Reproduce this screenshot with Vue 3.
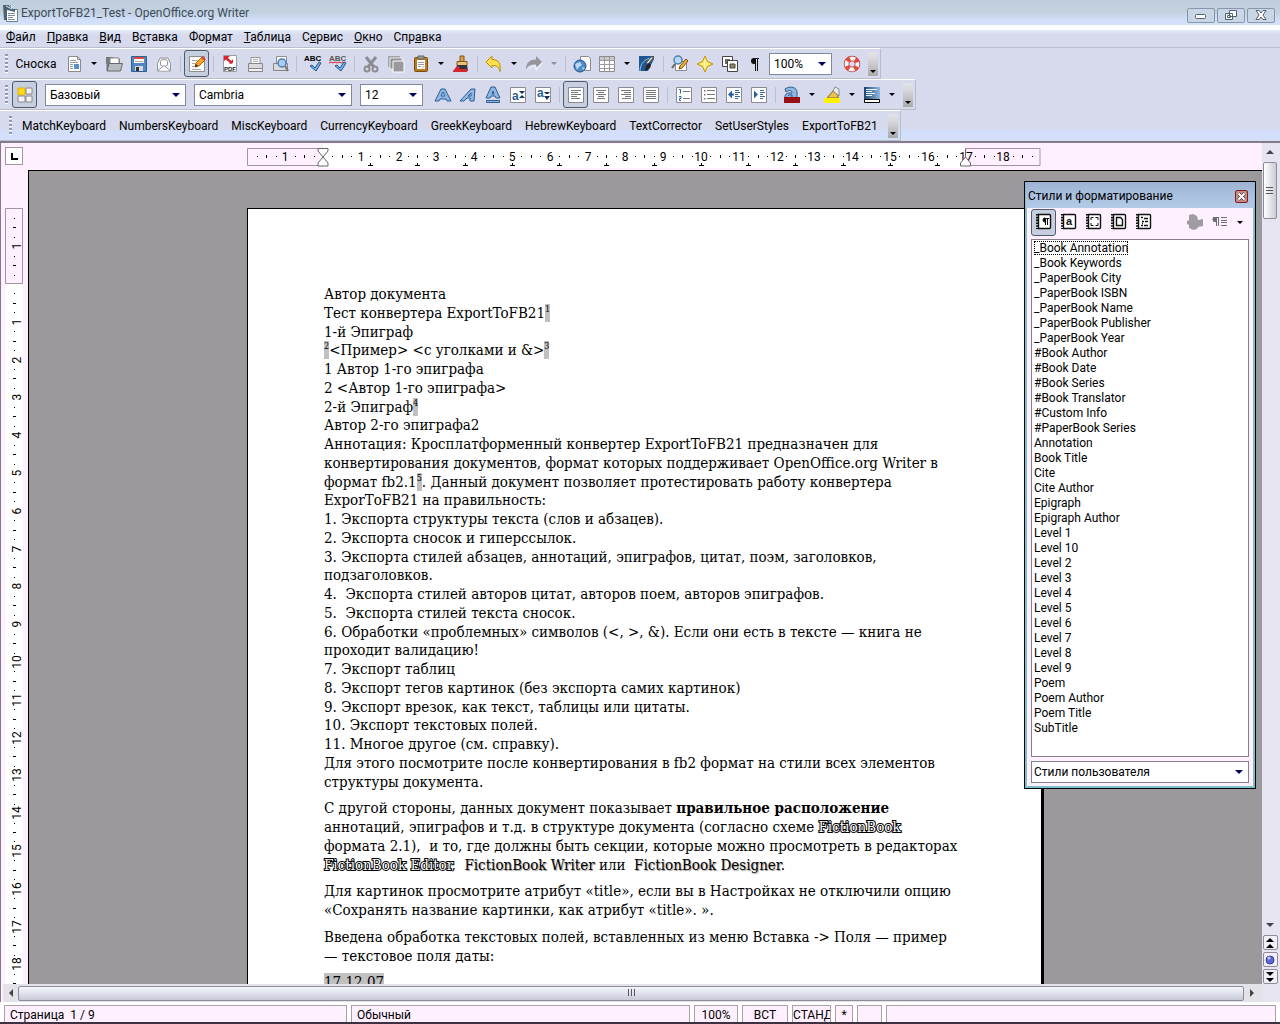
<script setup>
const menus = [
  ['', 'Ф', 'айл'],
  ['', 'П', 'равка'],
  ['', 'В', 'ид'],
  ['В', 'с', 'тавка'],
  ['Фо', 'р', 'мат'],
  ['', 'Т', 'аблица'],
  ['С', 'е', 'рвис'],
  ['', 'О', 'кно'],
  ['Спр', 'а', 'вка'],
]

const sheet = '<path d="M1.5 1.5h15v15h-15z" fill="#fff" stroke="#8a8a8f"/>'
const rows = (d, c = '#77777c') => `<path d="${d}" stroke="${c}" fill="none"/>`
const spell = (c, wave) =>
  `<text x="0" y="6" font-family="Liberation Sans" font-size="8" font-weight="bold" fill="${c}">ABC</text>${wave}<path d="M6 11l2-1 3 3 4-6 2 1-5 8z" fill="#7ab0e8" stroke="#23598f"/>`
const letter =
  '<path d="M1 15L7 3h4l6 12h-4l-1-2H6l-1 2zM7 10h4L9 6z" fill="#8fb7df" stroke="#2b5d94" fill-rule="evenodd"/>'
const book = '<path d="M3.5 1.5h11a1 1 0 0 1 1 1v12a1 1 0 0 1-1 1h-11z" fill="#fff" stroke="#111" stroke-width="1.4"/><path d="M2.5 1v15" stroke="#111" stroke-width="3" stroke-dasharray="1.6 1.2"/>'

const art = {
  doc: '<path d="M3.5 1.5h9l3 3v12h-12z" fill="#fff" stroke="#8a8a8f"/><path d="M12.500 1.500v3h3" fill="none" stroke="#8a8a8f"/><path d="M5 5.500h6M5 7.500h8M5 9.500h3M5 11.500h3M5 13.500h3" stroke="#999"/><path d="M9 9h5v5H9z" fill="#5b8fc4"/>',
  open: '<path d="M1 2h7l1 2h6v5H1z" fill="#777a7d"/><path d="M5 3h9v6H5z" fill="#fff" stroke="#888"/><path d="M1.500 8.500h3v7h-3z" fill="#777"/><path d="M4 8.500h13.500l-2 7.500H2z" fill="#b9bcc0" stroke="#65686c"/>',
  save: '<path d="M1.500 1.500h15v15h-15z" fill="#4d86c0" stroke="#2d5f96"/><path d="M4 2h10v6H4z" fill="#fff"/><path d="M4 2h10v2H4z" fill="#e04a3e"/><path d="M5 6.500h8" stroke="#aaa"/><path d="M5 11h8v5H5z" fill="#d7dade"/><path d="M6 12h3v4H6z" fill="#333"/>',
  mail: '<path d="M2.500 8.500L5 3h8l2.500 5.500v7.500h-13z" fill="#f7f7f7" stroke="#96969a"/><path d="M5.500 10V6.500q0-2 3.500-2t3.500 2V10L9 12z" fill="#fff" stroke="#96969a"/><path d="M3 15.500l6-5 6 5" fill="#fff" stroke="#96969a"/>',
  edit: sheet + rows('M4 5.500h7M4 8.500h6M4 11.500h5M4 14.500h9', '#aaa') + '<path d="M7 12l1-4 6-6 3 3-6 6z" fill="#f5a623" stroke="#b86a10"/><path d="M7 12l1-3 2 2z" fill="#222"/><path d="M14 2l3 3" stroke="#e0372c" stroke-width="2"/>',
  pdf: '<path d="M2.500.500h13v16h-13z" fill="#fff" stroke="#9a9a9f"/><path d="M5 3l6 5" stroke="#d8262c" stroke-width="2.500"/><path d="M3 1h6L3 6zM12 8l-4 1 4-5z" fill="#d8262c"/><text x="3" y="16" font-family="Liberation Sans" font-size="6" font-weight="bold" fill="#222">PDF</text>',
  print: '<path d="M5 2.500h9v6H5z" fill="#fff" stroke="#909095"/><path d="M7 4.500h5M7 6.500h5" stroke="#aaa"/><path d="M2.500 8.500h14v5h-14z" fill="#d9dadd" stroke="#85858a"/><path d="M2.500 13.500h14v3h-14z" fill="#f2f2f2" stroke="#85858a"/>',
  preview: '<path d="M5.500 1.500h10v7h-10z" fill="#fff" stroke="#909095"/><path d="M2.500 8.500h14v7h-14z" fill="#d9dadd" stroke="#85858a"/><circle cx="11" cy="8" r="4" fill="#a8cdf0" stroke="#4c7fb4" stroke-width="1.500"/><path d="M14 11l3 5" stroke="#777" stroke-width="2"/>',
  spell: spell('#000', ''),
  auto: spell('#555', '<path d="M0 8l2-1 2 1 2-1 2 1 2-1 2 1 2-1 2 1" stroke="#d8262c" fill="none"/>'),
  cut: '<path d="M4 2l8 10M14 2L6 12" stroke="#8d8d91" stroke-width="3"/><circle cx="5" cy="14" r="2.500" fill="none" stroke="#8d8d91" stroke-width="2"/><circle cx="13" cy="14" r="2.500" fill="none" stroke="#8d8d91" stroke-width="2"/>',
  copy: '<path d="M1 1h12v11H1z" fill="#a4a4a8"/><path d="M3 3h12v11H3z" fill="#8f8f93" stroke="#eee"/><path d="M6 6h11v11H6z" fill="#9a9a9e" stroke="#fff"/>',
  paste: '<rect x="2.500" y="2.500" width="13" height="14" rx="1" fill="#b57a22" stroke="#7a4c0b"/><path d="M5 5h8v9H5z" fill="#fff"/><path d="M6 1h6v3H6z" fill="#999" stroke="#666"/><path d="M6 7.500h6M6 9.500h6M6 11.500h3" stroke="#999"/><path d="M10 14v-3h4z" fill="#d5d5d5"/>',
  brush: '<path d="M8 1h4v6H8z" fill="#d7a24c" stroke="#855510"/><path d="M5 6.500h10v4H5z" fill="#e9c277" stroke="#855510"/><path d="M5 10h10l1 6H4z" fill="#33343c"/><path d="M1 16l4-5 3 1-1 2h8v3H1z" fill="#d4262c"/>',
  undo: '<path d="M1 7l6-6v3.500c6 0 9 3 8 12-1-5-3-6-8-6V13z" fill="#ffe04a" stroke="#b98e00"/>',
  redo: '<path d="M17 7l-6-6v3.500c-6 0-10 3-10 10 2-4 4-5 10-5V13z" fill="#96969a"/><path d="M4 14c3-3 6-3 7-3v4l6-7" fill="none" stroke="#fff"/>',
  web: '<path d="M7.500 1.500h8l2 2v12h-10z" fill="#fff" stroke="#8a8a8f"/><circle cx="7" cy="11" r="6" fill="#4e8bc8" stroke="#245488"/><path d="M2 9l5-2 2 3-3 2-2 3zM9 12l3 1-2 2z" fill="#b9d9f3"/>',
  table: sheet + '<path d="M2 2h14v3H2z" fill="#c9c9cc"/><path d="M1 5.500h16M1 9.500h16M1 13.500h16M6.500 2v14M11.500 2v14" stroke="#9b9b9f"/>',
  draw: '<path d="M1 1h15v3L10 16H1z" fill="#1f568f"/><path d="M2 16C2 8 8 3 14 3" stroke="#8fc2ef" fill="none"/><path d="M16 2l-6 7-2-1 5-6z" fill="#e8d7c1" stroke="#555"/><path d="M11 8l-3 3-1 5 5-3 1-3z" fill="#222"/>',
  find: '<path d="M4.500 6.500h11v9h-11z" fill="#fff" stroke="#8a8a8f"/><circle cx="7" cy="5" r="4" fill="#b9d9f3" stroke="#4c7fb4" stroke-width="1.500"/><path d="M4 9l-3 4" stroke="#666" stroke-width="2"/><path d="M8 14l1-3 6-7 2 2-6 7z" fill="#f2b233" stroke="#7a4c0b"/>',
  star: '<path d="M9 1l2.500 5.500L17 9l-5.500 2.500L9 17l-2.500-5.500L1 9l5.500-2.500z" fill="#ffe45c" stroke="#c79400"/><path d="M9 5v8M5 9h8" stroke="#fff8c8"/>',
  gallery: '<path d="M1.500 1.500h10v10h-10z" fill="#fff" stroke="#444"/><path d="M4 4h5v5H4z" fill="#6b6b60"/><path d="M6.500 5.500h10v11h-10z" fill="#fff" stroke="#444"/><path d="M9 9h5v4H9z" fill="#8a8a5c" stroke="#444"/>',
  pilcrow: '<path d="M8 3.500h5M9.500 3v13M11.500 3v13" stroke="#111"/><path d="M10 3H8a3 3 0 0 0 0 6h2z" fill="#111"/>',
  help: '<circle cx="9" cy="9" r="5.500" fill="none" stroke="#b33" stroke-width="5.500"/><circle cx="9" cy="9" r="5.500" fill="none" stroke="#f4f4f4" stroke-width="4"/><circle cx="9" cy="9" r="5.500" fill="none" stroke="#e2493b" stroke-width="4.500" stroke-dasharray="3.600 5.040" stroke-dashoffset="-2.500"/>',
  styles: '<path d="M2 2h7v7H2z" fill="#ffd91a" stroke="#e0b400"/><path d="M10 2h6v6h-6zM2 10h7v6H2zM10 10h6v6h-6z" fill="#f2f2f4" stroke="#8a8a8f"/>',
  bold: letter,
  italic: '<path d="M1 15L12 3h4l-1 12h-4v-3H8l-3 3zM9 10h3V7z" fill="#8fb7df" stroke="#2b5d94" fill-rule="evenodd"/>',
  under: '<path d="M2 12L7 1h4l5 11h-4l-1-2H7l-1 2zM8 8h2l-1-3z" fill="#8fb7df" stroke="#2b5d94" fill-rule="evenodd"/><path d="M2.500 14.500h13v2h-13z" fill="#8fb7df" stroke="#2b5d94"/>',
  sup: sheet + '<text x="3" y="14" font-family="Liberation Sans" font-size="12" font-weight="bold" fill="#2b5d94">a</text><path d="M10 5h6l-3 3zM10 12h6l-3-3z" fill="#1c2f5c"/>',
  sub: sheet + '<text x="3" y="11" font-family="Liberation Sans" font-size="12" font-weight="bold" fill="#2b5d94">a</text><path d="M10 6h6l-2 2h-2zM10 10h6l-3 4z" fill="#1c2f5c"/>',
  left: sheet + rows('M4 4.500h10M4 6.500h7M4 8.500h10M4 10.500h6M4 12.500h9'),
  center: sheet + rows('M4 4.500h10M6 6.500h6M4 8.500h10M6 10.500h6M5 12.500h8'),
  right: sheet + rows('M4 4.500h10M7 6.500h7M4 8.500h10M8 10.500h6M5 12.500h9'),
  justify: sheet + rows('M4 4.500h10M4 6.500h10M4 8.500h10M4 10.500h10M4 12.500h10'),
  numbers: sheet + rows('M8 5.500h7M8 12.500h7') + '<path d="M4 3.500h1.500v4M4 10.500h2v2H4.500v2H6" stroke="#2a5fa8" fill="none"/>',
  bullets: sheet + rows('M7 4.500h8M7 8.500h8M7 12.500h8') + '<path d="M4 4h1.500v1.500H4zM4 8h1.500v1.500H4zM4 12h1.500v1.500H4z" fill="#777"/>',
  outdent: sheet + '<path d="M3 8.500l4-4v3h2v2H7v3z" fill="#2a5fa8"/>' + rows('M10 4.500h4M10 6.500h5M10 8.500h3M10 10.500h5M10 12.500h3', '#3f6aa0'),
  indent: sheet + '<path d="M8 8.500l-4-4v8z" fill="#2a5fa8"/>' + rows('M10 4.500h4M10 6.500h5M10 8.500h3M10 10.500h5M10 12.500h3', '#3f6aa0'),
  color: '<path d="M2 11c0-4 3-4 7-4 0-3-3-3-6-1L2 3c6-4 12-1 12 3v5" fill="#8fb7df" stroke="#2b5d94"/><path d="M5 10c1-2 3-1 4-1v2" fill="none" stroke="#2b5d94"/><path d="M1 11h16v6H1z" fill="#9b0f16"/>',
  highlight: '<path d="M4 12L10 5l5 4v3z" fill="#e8c24a" stroke="#8d6a10"/><path d="M10 5l2-4 4 2v7z" fill="#eee" stroke="#888"/><path d="M1 12h16v5H1z" fill="#fff200"/>',
  back: '<defs><linearGradient id="sky" x1="0" x2="1"><stop stop-color="#1d466f"/><stop offset="1" stop-color="#8fb9e2"/></linearGradient></defs><path d="M1 1h16v12H1z" fill="url(#sky)"/><path d="M3 3.500h11M3 5.500h6M3 7.500h9M3 9.500h6" stroke="#e9f1fa"/><path d="M1.500 13.500h15v3h-15z" fill="#fff" stroke="#000"/>',
  para: book + '<path d="M9 5.500h5M10.500 5v7M12.500 5v7" stroke="#111"/><path d="M10 5a2 2 0 0 0 0 4z" fill="#111" stroke="#111"/>',
  char: book + '<text x="6" y="12" font-family="Liberation Sans" font-size="11" font-weight="bold" fill="#111">a</text>',
  frame: book + '<path d="M6 7V4.500h2.500M10.500 4.500H13V7M13 10v2.500h-2.500M8.500 12.500H6V10" fill="none" stroke="#111"/>',
  page: book + '<path d="M6.500 4.500h4l2 2v6h-6z" fill="none" stroke="#111" stroke-width="1.400"/>',
  list: book + '<path d="M6 4.500h2M9 5.500h4M7 8.500h2M10 8.500h3M6 12.500h2M9 12.500h4M7 10.500h1" stroke="#111" stroke-width="1.300"/>',
  fill: '<path d="M1 8l2-1V2l4-1 4 2 1 4 5-1v7l-5 1-1 2-4 1-4-2v-3l-2-1z" fill="#a09ca2"/>',
  update: '<path d="M2 4.500h6M5.500 4v9M7.500 4v9" stroke="#6b6b70"/><path d="M5 4H4a2 2 0 0 0 0 5h1z" fill="#6b6b70"/><path d="M10 4.500h6M10 7.500h6M10 9.500h6M10 12.500h6" stroke="#6b6b70"/>',
}

const b = (icon, title, on = false) => ({ type: 'button', icon, title, on })
const drop = (off = false) => ({ type: 'drop', off })
const sep = { type: 'sep' }

const standard = [
  b('doc', 'Создать'), drop(), b('open', 'Открыть'), b('save', 'Сохранить'), b('mail', 'Отправить'), sep,
  b('edit', 'Правка файла', true), sep,
  b('pdf', 'Экспорт в PDF'), b('print', 'Печать'), b('preview', 'Просмотр страницы'), sep,
  b('spell', 'Проверка орфографии'), b('auto', 'Автопроверка'), sep,
  b('cut', 'Вырезать'), b('copy', 'Копировать'), b('paste', 'Вставить'), drop(), b('brush', 'Копировать формат'), sep,
  b('undo', 'Отменить'), drop(), b('redo', 'Вернуть'), drop(true), sep,
  b('web', 'Гиперссылка'), b('table', 'Таблица'), drop(), b('draw', 'Рисование'), sep,
  b('find', 'Найти'), b('star', 'Навигатор'), b('gallery', 'Галерея'), b('pilcrow', 'Непечатаемые символы'),
]
const format = [
  b('bold', 'Жирный'), b('italic', 'Курсив'), b('under', 'Подчёркнутый'), b('sup', 'Надстрочный'), b('sub', 'Подстрочный'), sep,
  b('left', 'По левому краю', true), b('center', 'По центру'), b('right', 'По правому краю'), b('justify', 'По ширине'), sep,
  b('numbers', 'Нумерация'), b('bullets', 'Маркеры'), b('outdent', 'Уменьшить отступ'), b('indent', 'Увеличить отступ'), sep,
  b('color', 'Цвет шрифта'), drop(), b('highlight', 'Цвет выделения'), drop(), b('back', 'Цвет фона'), drop(),
]
const macros = ['MatchKeyboard', 'NumbersKeyboard', 'MiscKeyboard', 'CurrencyKeyboard', 'GreekKeyboard', 'HebrewKeyboard', 'TextCorrector', 'SetUserStyles', 'ExportToFB21']

const styleTabs = [b('para', 'Стили абзаца', true), b('char', 'Стили символов'), b('frame', 'Стили врезок'), b('page', 'Стили страницы'), b('list', 'Стили списков')]
const styleNames = [
  '_Book Annotation', '_Book Keywords', '_PaperBook City', '_PaperBook ISBN', '_PaperBook Name', '_PaperBook Publisher', '_PaperBook Year',
  '#Book Author', '#Book Date', '#Book Series', '#Book Translator', '#Custom Info', '#PaperBook Series',
  'Annotation', 'Book Title', 'Cite', 'Cite Author', 'Epigraph', 'Epigraph Author',
  'Level 1', 'Level 10', 'Level 2', 'Level 3', 'Level 4', 'Level 5', 'Level 6', 'Level 7', 'Level 8', 'Level 9',
  'Poem', 'Poem Author', 'Poem Title', 'SubTitle',
]

// Ruler geometry: 96 dpi, origin at the text margin.
const CM = 96 / 2.54
function marks(from, to) {
  const out = []
  for (let q = from * 4; q <= to * 4; q++) {
    if (q === 0) continue
    const kind = q % 4 === 0 ? 'num' : q % 2 === 0 ? 'tick' : 'dot'
    out.push({ at: Math.round((q / 4) * CM), kind, label: Math.abs(q / 4) })
  }
  return out
}
const hMarks = marks(-1.75, 18.75)
const vMarks = marks(-1.75, 18.5)
const tabs = Array.from({ length: 13 }, (_, i) => Math.round((i + 1) * 1.25 * CM))
</script>

<template>
  <div class="window">
    <header class="title">
      <svg class="app-icon" width="16" height="18" viewBox="0 0 16 18">
        <path d="M4.500 5.500h11v12h-11z" fill="#fff" stroke="#6d7f8c" />
        <path d="M6 9.500h7M6 11.500h7M6 13.500h5M6 15.500h7" stroke="#7d8e9a" />
        <path d="M1 1h8v3l4 1v3L5 6v10H2z" fill="#4a6572" />
        <path d="M4 2l6 3M7 1l5 4" stroke="#dfe9ee" />
      </svg>
      <h1>ExportToFB21_Test - OpenOffice.org Writer</h1>
      <div class="win-buttons">
        <button aria-label="Свернуть"><svg width="14" height="12"><rect x="1.500" y="5.500" width="10" height="4" rx="1" fill="#fff" stroke="#50606e" /></svg></button>
        <button aria-label="Восстановить"><svg width="14" height="12"><path d="M5.500 1.500h7v6h-7zM1.500 4.500h7v6h-7z" fill="#fff" stroke="#50606e" /><path d="M3.500 6.500h3v2h-3z" fill="none" stroke="#50606e" /></svg></button>
        <button aria-label="Закрыть"><svg width="14" height="12"><path d="M2 1.500h3l2 2.500 2-2.500h3L9 6l3 4.500H9L7 8l-2 2.500H2L5 6z" fill="#fff" stroke="#50606e" /></svg></button>
      </div>
    </header>

    <nav class="menu">
      <button v-for="m in menus" :key="m.join('')">{{ m[0] }}<u>{{ m[1] }}</u>{{ m[2] }}</button>
    </nav>

    <div class="bars">
      <div class="bar" role="toolbar">
        <i class="grip"></i>
        <button class="note-button">Сноска</button>
        <template v-for="(t, i) in standard" :key="i">
          <button v-if="t.type === 'button'" class="tool" :class="{ on: t.on }" :aria-label="t.title"><svg width="18" height="18" viewBox="0 0 18 18" v-html="art[t.icon]"></svg></button>
          <button v-else-if="t.type === 'drop'" class="drop" :class="{ off: t.off }" aria-label="Ещё"></button>
          <i v-else class="sep"></i>
        </template>
        <label class="combo zoom"><select aria-label="Масштаб"><option>100%</option></select></label>
        <button class="tool help" aria-label="Справка"><svg width="18" height="18" viewBox="0 0 18 18" v-html="art.help"></svg></button>
        <button class="overflow" aria-label="Параметры панели"></button>
      </div>

      <div class="bar" role="toolbar">
        <i class="grip"></i>
        <button class="tool on" aria-label="Стили"><svg width="18" height="18" viewBox="0 0 18 18" v-html="art.styles"></svg></button>
        <label class="combo style"><select aria-label="Стиль"><option>Базовый</option></select></label>
        <label class="combo font"><select aria-label="Шрифт"><option>Cambria</option></select></label>
        <label class="combo size"><select aria-label="Кегль"><option>12</option></select></label>
        <template v-for="(t, i) in format" :key="i">
          <button v-if="t.type === 'button'" class="tool" :class="{ on: t.on }" :aria-label="t.title"><svg width="18" height="18" viewBox="0 0 18 18" v-html="art[t.icon]"></svg></button>
          <button v-else-if="t.type === 'drop'" class="drop" aria-label="Ещё"></button>
          <i v-else class="sep"></i>
        </template>
        <button class="overflow" aria-label="Параметры панели"></button>
      </div>

      <div class="bar macros" role="toolbar">
        <i class="grip"></i>
        <button v-for="m in macros" :key="m">{{ m }}</button>
        <button class="overflow" aria-label="Параметры панели"></button>
      </div>
    </div>

    <main class="work">
      <div class="ruler-row">
        <button class="corner" aria-label="Тип табуляции"></button>
        <div class="ruler-track">
          <svg class="h-ruler" width="797" height="24">
            <rect x="76" y="0" width="642" height="24" fill="#fff" />
            <path d="M76 4.500H.5v17H76M718 4.500h75v17h-75" fill="none" stroke="#a394a3" />
            <g transform="translate(76 0)">
              <template v-for="m in hMarks" :key="m.at">
                <text v-if="m.kind === 'num'" :x="m.at" y="17" text-anchor="middle">{{ m.label }}</text>
                <path v-else-if="m.kind === 'tick'" :d="`M${m.at + 0.5} 11v3`" stroke="#000" />
                <path v-else :d="`M${m.at} 12.500h1`" stroke="#000" />
              </template>
              <path v-for="t in tabs" :key="t" :d="`M${t + 0.5} 19v3M${t - 2} 21.500h5`" stroke="#000" />
              <path d="M-5 4.500H5V7L0 13l5 6v3H-5v-3l5-6-5-6z" fill="#fff" stroke="#666" />
              <path d="M642.500 5v8l-5 6v3h10v-3l-5-6" fill="#fff" stroke="#666" />
            </g>
          </svg>
        </div>
      </div>

      <div class="v-track">
        <svg width="18" height="815">
          <rect x="0" y="114" width="18" height="701" fill="#fff" />
          <path d="M.5 38.500h17v75H.5z" fill="none" stroke="#a394a3" />
          <g transform="translate(0 114)">
            <template v-for="m in vMarks" :key="m.at">
              <text v-if="m.kind === 'num'" text-anchor="middle" :transform="`translate(16 ${m.at}) rotate(-90)`">{{ m.label }}</text>
              <path v-else-if="m.kind === 'tick'" :d="`M8 ${m.at + 0.5}h3`" stroke="#000" />
              <path v-else :d="`M9 ${m.at + 0.5}h1`" stroke="#000" />
            </template>
          </g>
        </svg>
      </div>

      <div class="canvas">
        <article class="page">
          <p>Автор документа</p>
          <p>Тест конвертера ExportToFB21<span class="fn">1</span></p>
          <p>1-й Эпиграф</p>
          <p><span class="fn">2</span>&lt;Пример&gt; &lt;с уголками и &amp;&gt;<span class="fn">3</span></p>
          <p>1 Автор 1-го эпиграфа</p>
          <p>2 &lt;Автор 1-го эпиграфа&gt;</p>
          <p>2-й Эпиграф<span class="fn">4</span></p>
          <p>Автор 2-го эпиграфа2</p>
          <p>Аннотация: Кросплатформенный конвертер ExportToFB21 предназначен для<br />конвертирования документов, формат которых поддерживает OpenOffice.org Writer в<br />формат fb2.1<span class="fn">5</span>. Данный документ позволяет протестировать работу конвертера<br />ExporTоFB21 на правильность:</p>
          <p>1. Экспорта структуры текста (слов и абзацев).</p>
          <p>2. Экспорта сносок и гиперссылок.</p>
          <p>3. Экспорта стилей абзацев, аннотаций, эпиграфов, цитат, поэм, заголовков,<br />подзаголовков.</p>
          <p>4.&nbsp; Экспорта стилей авторов цитат, авторов поем, авторов эпиграфов.</p>
          <p>5.&nbsp; Экспорта стилей текста сносок.</p>
          <p>6. Обработки «проблемных» символов (&lt;, &gt;, &amp;). Если они есть в тексте — книга не<br />проходит валидацию!</p>
          <p>7. Экспорт таблиц</p>
          <p>8. Экспорт тегов картинок (без экспорта самих картинок)</p>
          <p>9. Экспорт врезок, как текст, таблицы или цитаты.</p>
          <p>10. Экспорт текстовых полей.</p>
          <p>11. Многое другое (см. справку).</p>
          <p>Для этого посмотрите после конвертирования в fb2 формат на стили всех элементов<br />структуры документа.</p>
          <p class="body">С другой стороны, данных документ показывает <b>правильное расположение</b><br />аннотаций, эпиграфов и т.д. в структуре документа (согласно схеме <span class="outline">FictionBook</span><br />формата 2.1),&nbsp; и то, где должны быть секции, которые можно просмотреть в редакторах<br /><span class="outline">FictionBook Editor</span>,&nbsp; <span class="shade">FictionBook Writer</span> или&nbsp; <span class="shade">FictionBook Designer</span>.</p>
          <p class="body">Для картинок просмотрите атрибут «title», если вы в Настройках не отключили опцию<br />«Сохранять название картинки, как атрибут «title». ».</p>
          <p class="body">Введена обработка текстовых полей, вставленных из меню Вставка -&gt; Поля — пример<br />— текстовое поля даты:</p>
          <p class="body"><span class="field">17.12.07</span></p>
        </article>
      </div>

      <div class="v-scroll">
        <button class="arrow up" aria-label="Вверх"></button>
        <div class="thumb"><svg width="8" height="9"><path d="M0 1.500h7M0 4.500h7M0 7.500h7" stroke="#555" /></svg></div>
        <button class="arrow down" aria-label="Вниз"></button>
        <button class="nav" aria-label="Предыдущая страница"><svg width="10" height="12"><path d="M5 1l4 4H1zM5 7l4 4H1z" /></svg></button>
        <button class="nav" aria-label="Навигация"><svg width="10" height="12"><circle cx="5" cy="6" r="4" fill="#5f66d8" stroke="#3a3f96" /><circle cx="4" cy="4" r="1.500" fill="#c5c9ff" /></svg></button>
        <button class="nav" aria-label="Следующая страница"><svg width="10" height="12"><path d="M5 5L1 1h8zM5 11L1 7h8z" /></svg></button>
      </div>

      <div class="h-scroll">
        <button class="arrow left" aria-label="Влево"></button>
        <div class="thumb"><svg width="9" height="8"><path d="M1.500 0v7M4.500 0v7M7.500 0v7" stroke="#555" /></svg></div>
        <button class="arrow right" aria-label="Вправо"></button>
      </div>

      <aside class="styles-pane">
        <div class="pane-title">
          <h2>Стили и форматирование</h2>
          <button aria-label="Закрыть панель"><svg width="9" height="9"><path d="M1.500 1.500l6 6M7.500 1.500l-6 6" stroke="#444" stroke-width="3.500" /><path d="M1.500 1.500l6 6M7.500 1.500l-6 6" stroke="#fff" stroke-width="2" /></svg></button>
        </div>
        <div class="pane-tools">
          <button v-for="t in styleTabs" :key="t.icon" class="tool" :class="{ on: t.on }" :aria-label="t.title"><svg width="18" height="18" viewBox="0 0 18 18" v-html="art[t.icon]"></svg></button>
          <button class="tool push" aria-label="Режим заливки"><svg width="18" height="18" viewBox="0 0 18 18" v-html="art.fill"></svg></button>
          <button class="tool" aria-label="Обновить стиль"><svg width="18" height="18" viewBox="0 0 18 18" v-html="art.update"></svg></button>
          <button class="drop" aria-label="Ещё"></button>
        </div>
        <ul class="style-list" role="listbox" aria-label="Стили">
          <li v-for="(s, i) in styleNames" :key="s" role="option" :class="{ focus: i === 0 }"><span>{{ s }}</span></li>
        </ul>
        <label class="combo filter"><select aria-label="Фильтр стилей"><option>Стили пользователя</option></select></label>
      </aside>
    </main>

    <footer class="status">
      <span class="c-page">Страница&nbsp; 1 / 9</span>
      <span class="c-style">Обычный</span>
      <span class="c-zoom">100%</span>
      <span class="c-ins">ВСТ</span>
      <span class="c-std">СТАНД</span>
      <span class="c-mod">*</span>
      <span class="c-sig"></span>
      <span class="c-rest"></span>
    </footer>
  </div>
</template>

<style>
body {
  margin: 0;
  overflow: hidden;
}
</style>

<style scoped>
.window {
  display: flex;
  flex-direction: column;
  height: 100vh;
  overflow: hidden;
  background: #d6daec;
  color: #000;
  font: 12px/16px Roboto, "Open Sans", sans-serif;
}
button,
select {
  font: inherit;
  color: inherit;
  margin: 0;
  padding: 0;
  border: 0;
  background: none;
}
svg {
  display: block;
  flex: none;
}
.title {
  display: flex;
  align-items: center;
  flex: none;
  height: 25px;
  padding: 0 5px 0 2px;
  background: linear-gradient(#bfcedb 0, #c3d1df 50%, #d2dffa 80%, #d3e0fa 100%);
}
.title h1 {
  margin: 0 auto 0 3px;
  font-size: 12px;
  font-weight: 400;
  color: #3d4c5c;
}
.win-buttons {
  display: flex;
  gap: 2px;
  padding-top: 5px;
}
.win-buttons button {
  display: flex;
  align-items: center;
  justify-content: center;
  width: 28px;
  height: 15px;
  border: 1px solid #8796a8;
  border-radius: 2px;
  background: #c9d6e6;
}
.menu {
  display: flex;
  align-items: center;
  flex: none;
  gap: 11px;
  height: 20px;
  padding: 2px 0 0 6px;
  border-bottom: 1px solid #b9bfce;
  background: linear-gradient(#fff 0, #fff 4px, #e0e6f8 6px, #d9def1 9px, #d6daec 10px);
}
.bars {
  display: flex;
  flex-direction: column;
  align-items: flex-start;
  flex: none;
  background: linear-gradient(#d6daec 80px, #d2dffc 84px, #d4dff8 92px, #d9dbe4 93px);
}
.bar {
  display: flex;
  align-items: center;
  height: 29px;
  padding: 0 2px 0 5px;
  border: solid;
  border-width: 1px 1px 1px 0;
  border-color: #fff #b9bcc9 #b9bcc9;
}
.bar.macros {
  gap: 13px;
  padding-left: 9px;
}
.macros .overflow {
  margin-left: -3px;
}
.grip {
  flex: none;
  width: 3px;
  height: 20px;
  margin-right: 4px;
  background: repeating-linear-gradient(#9498a8 0, #9498a8 2px, #fff 2px, #fff 3px, transparent 3px, transparent 4px);
}
.macros .grip {
  margin-right: -3px;
}
.note-button {
  width: 46px;
  margin: 0 2px 0 1px;
}
.tool {
  display: flex;
  align-items: center;
  justify-content: center;
  flex: none;
  width: 25px;
  height: 27px;
  border-radius: 3px;
}
.tool.on {
  border: 1px solid #4f5a6b;
  background: #c6cfdf;
}
.drop,
.arrow {
  display: flex;
  align-items: center;
  justify-content: center;
  flex: none;
  width: 15px;
  height: 20px;
}
.drop::before,
.overflow::before {
  content: "";
  border: solid transparent;
  border-width: 3px 3px 0;
  border-top-color: #000;
}
.drop.off::before {
  border-top-color: #8d8d95;
}
.sep {
  flex: none;
  width: 1px;
  height: 16px;
  margin: 0 3px 0 4px;
  background: #bcc0ce;
}
.overflow {
  display: flex;
  align-items: flex-end;
  justify-content: center;
  width: 10px;
  height: 24px;
  margin-left: 4px;
  padding-bottom: 3px;
  background: linear-gradient(#e2e3e8, #d8d8dc 30%, #a9a9ac);
}
.combo {
  display: flex;
  align-items: center;
  box-sizing: border-box;
  height: 22px;
  border: 1px solid #8288a0;
  background: #fff;
}
.combo select {
  flex: 1;
  min-width: 0;
  padding-left: 4px;
  appearance: none;
  outline: 0;
}
.combo::after {
  content: "";
  margin-right: 5px;
  border: solid transparent;
  border-width: 4px 4px 0;
  border-top-color: #000064;
  pointer-events: none;
}
.zoom {
  width: 63px;
  margin-left: 2px;
}
.help {
  margin-left: 7px;
}
.style {
  width: 141px;
  margin: 0 8px;
}
.font {
  width: 158px;
}
.size {
  width: 63px;
  margin: 0 7px 0 8px;
}
.work {
  position: relative;
  display: grid;
  grid-template: 27px 1fr 18px / 25px 1fr 18px;
  flex: 1;
  min-height: 0;
  padding-left: 2px;
  border-top: 2px solid #827c8a;
  border-left: 1px solid #827c8a;
  background: #fff0ff;
}
.ruler-row {
  display: flex;
  grid-area: 1 / 1 / 2 / 3;
  overflow: hidden;
}
.corner {
  flex: none;
  width: 18px;
  height: 18px;
  margin: 4px 5px 0 2px;
  border: 1px solid #a394a3;
  background: #fff;
}
.corner::before {
  content: "";
  display: block;
  width: 5px;
  height: 5px;
  margin-left: 5px;
  border: solid #000;
  border-width: 0 0 2px 2px;
}
.ruler-track {
  flex: 1;
}
.h-ruler {
  margin: 1px auto 0;
}
.h-ruler text,
.v-track text {
  font-size: 12px;
}
.v-track {
  grid-area: 2 / 1 / 3 / 2;
  padding-left: 2px;
  overflow: hidden;
}
.canvas {
  grid-area: 2 / 2 / 3 / 3;
  overflow: hidden;
  border: solid #000;
  border-width: 1px 0 0 1px;
  background: #9b999b;
}
.page {
  box-sizing: border-box;
  width: 797px;
  min-height: 100%;
  margin: 37px auto 0;
  padding: 76px 0 0 76px;
  border: solid #000;
  border-width: 1px 3px 0 1px;
  background: #fff;
  font: 15px/1.25 "DejaVu Serif Condensed", "DejaVu Serif", serif;
  white-space: nowrap;
}
.page p {
  margin: 0;
}
.page .body {
  margin-top: 8px;
}
.fn {
  display: inline-block;
  height: 18px;
  vertical-align: top;
  background: #c0c0c0;
  font-size: 9px;
  line-height: 11px;
}
.outline {
  color: #fff;
  -webkit-text-stroke: 2px #000;
  paint-order: stroke fill;
}
.shade {
  text-shadow: 1px 1px 1px #999;
}
.field {
  background: #c0c0c0;
}
.v-scroll {
  display: flex;
  flex-direction: column;
  align-items: center;
  grid-area: 1 / 3 / 4 / 4;
  gap: 2px;
  padding: 1px 3px 18px 1px;
  background: #e6e4f0;
}
.arrow::before {
  content: "";
  border: 4px solid transparent;
}
.arrow.up::before {
  border-bottom-color: #444;
  border-top: 0;
}
.arrow.down::before {
  border-top-color: #444;
  border-bottom: 0;
}
.arrow.left::before {
  border-right-color: #444;
  border-left: 0;
}
.arrow.right::before {
  border-left-color: #444;
  border-right: 0;
}
.arrow.up,
.arrow.down {
  height: 16px;
}
.arrow.down {
  margin-top: auto;
}
.thumb {
  display: flex;
  align-items: center;
  justify-content: center;
  box-sizing: border-box;
  border: 1px solid #8e8c98;
  border-radius: 2px;
}
.v-scroll .thumb {
  width: 14px;
  height: 57px;
  background: linear-gradient(90deg, #fff, #c9ccd6);
}
.nav {
  display: flex;
  align-items: center;
  justify-content: center;
  width: 15px;
  height: 15px;
  border: 1px solid #8e8c98;
  border-radius: 2px;
  background: #f2eef8;
  box-sizing: border-box;
}
.h-scroll {
  display: flex;
  align-items: center;
  grid-area: 3 / 1 / 4 / 3;
  padding-right: 3px;
  background: #e4e3ea;
}
.h-scroll .thumb {
  flex: 1;
  height: 15px;
  background: linear-gradient(#f4f6fc, #dfe2ee 50%, #c7cad4);
}
.status {
  display: flex;
  flex: none;
  gap: 4px;
  height: 17px;
  padding: 3px 4px 0;
  border-bottom: 2px solid #3d3040;
  background: #fff;
}
.status span {
  box-sizing: border-box;
  flex: none;
  height: 17px;
  border: 1px solid #aaa0aa;
  border-bottom: 0;
  background: #fff0ff;
  text-align: center;
  line-height: 18px;
  white-space: nowrap;
  overflow: hidden;
}
.status .c-page,
.status .c-style {
  padding-left: 5px;
  text-align: left;
}
.c-page {
  width: 343px;
}
.c-style {
  width: 339px;
}
.c-zoom {
  width: 44px;
}
.c-ins {
  width: 46px;
}
.c-std {
  width: 39px;
}
.c-mod {
  width: 18px;
}
.c-sig {
  width: 25px;
}
.status .c-rest {
  flex: 1;
}
.styles-pane {
  position: absolute;
  top: 38px;
  right: 24px;
  display: flex;
  flex-direction: column;
  box-sizing: border-box;
  width: 232px;
  padding: 0 4px 5px;
  border: 1px solid #000;
  box-shadow: inset 0 0 0 2px #7cc0d0;
  background: #fff0ff;
}
.pane-title {
  display: flex;
  align-items: center;
  justify-content: space-between;
  height: 24px;
  margin: 0 -3px;
  padding: 2px 6px 0 2px;
  background: linear-gradient(#9fb4d4, #b4cbe8);
}
.pane-title h2 {
  margin: 0;
  font-size: 12px;
  font-weight: 400;
}
.pane-title button {
  display: flex;
  align-items: center;
  justify-content: center;
  box-sizing: border-box;
  width: 13px;
  height: 13px;
  border: 1px solid #7d2020;
  border-radius: 2px;
  background: #c98a86;
}
.pane-tools {
  display: flex;
  align-items: center;
  height: 28px;
  padding: 0 4px 3px 2px;
}
.push {
  margin-left: auto;
}
.style-list {
  height: 516px;
  margin: 0 2px;
  padding: 0;
  border: 1px solid #86808a;
  list-style: none;
  background: #fff;
}
.style-list li {
  height: 15px;
  padding-left: 2px;
  line-height: 17px;
}
.style-list .focus span {
  outline: 1px dotted #000;
  outline-offset: -1px;
}
.filter {
  margin: 4px 2px 0;
  border-color: #86808a;
}
.filter select {
  padding-left: 2px;
}
</style>
